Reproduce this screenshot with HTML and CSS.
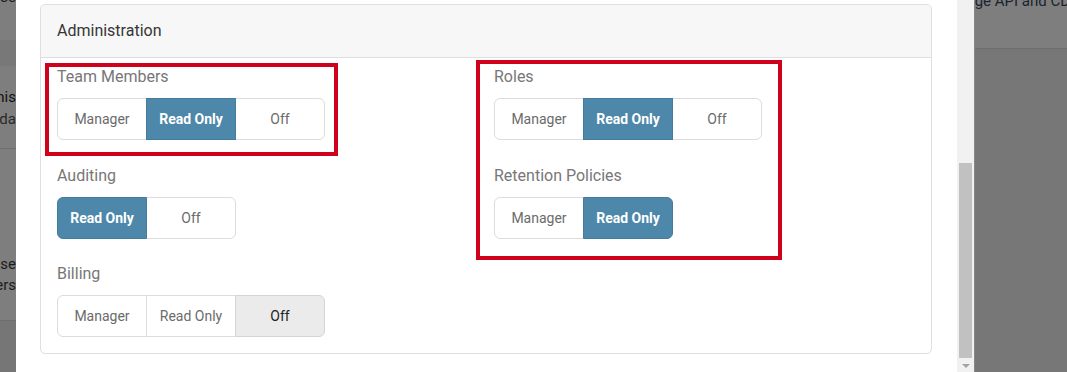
FILE: index.html
```html
<!DOCTYPE html>
<html>
<head>
<meta charset="utf-8">
<link rel="stylesheet" href="styles.css">
</head>
<body>
<div class="page">
  <aside class="bg-left">
    <div class="bl bl-a"><span class="frag frag-top">use</span></div>
    <div class="bl bl-b"></div>
    <div class="bl bl-c"><span class="frag frag-strong">Adminis</span><span class="frag">Upda</span></div>
    <div class="bl bl-d"><span class="frag">House</span><span class="frag">Others</span></div>
    <div class="bl bl-e"></div>
  </aside>

  <main class="modal">
    <div class="modal-content">
      <section class="card">
        <header class="card-header">Administration</header>
        <div class="card-body">
          <div class="col">
            <div class="field">
              <div class="label">Team Members</div>
              <div class="group">
                <button class="btn">Manager</button>
                <button class="btn active">Read Only</button>
                <button class="btn">Off</button>
              </div>
            </div>
            <div class="field">
              <div class="label">Auditing</div>
              <div class="group">
                <button class="btn active">Read Only</button>
                <button class="btn">Off</button>
              </div>
            </div>
            <div class="field field-tight">
              <div class="label">Billing</div>
              <div class="group">
                <button class="btn">Manager</button>
                <button class="btn">Read Only</button>
                <button class="btn selected">Off</button>
              </div>
            </div>
          </div>
          <div class="col">
            <div class="field">
              <div class="label">Roles</div>
              <div class="group">
                <button class="btn">Manager</button>
                <button class="btn active">Read Only</button>
                <button class="btn">Off</button>
              </div>
            </div>
            <div class="field">
              <div class="label">Retention Policies</div>
              <div class="group">
                <button class="btn">Manager</button>
                <button class="btn active">Read Only</button>
              </div>
            </div>
          </div>
          <div class="mark mark-team"></div>
          <div class="mark mark-roles"></div>
        </div>
      </section>
    </div>
    <div class="scrollbar">
      <div class="thumb"></div>
      <div class="arrow"></div>
    </div>
  </main>

  <aside class="bg-right">
    <div class="br-top"><span class="frag-right">Manage API and CDN</span></div>
    <div class="br-rest"></div>
  </aside>
</div>
</body>
</html>
```

FILE: styles.css
```css
* { box-sizing: border-box; }
html, body { margin: 0; padding: 0; }
body {
  width: 1067px;
  height: 372px;
  overflow: hidden;
  font-family: Roboto, "Liberation Sans", sans-serif;
  background: #777;
}
.page {
  display: flex;
  height: 372px;
}

/* background page under overlay */
.bg-left {
  width: 16px;
  flex: 0 0 16px;
  overflow: hidden;
  display: flex;
  flex-direction: column;
  font-family: Roboto, "Liberation Sans", sans-serif;
  font-size: 15px;
  color: #1f1f1f;
}
.bl {
  display: flex;
  flex-direction: column;
  align-items: flex-end;
  background: #7e7e7e;
}
.frag { white-space: nowrap; line-height: 22px; }
.bl-a { height: 40px; }
.frag-top { margin-top: -14px; }
.bl-b { height: 26px; background: #787878; }
.bl-c { height: 83px; padding-top: 20px; border-bottom: 1px solid #6e6e6e; }
.frag-strong { color: #111; }
.bl-c .frag:last-child { color: #2a2a2a; font-size: 15px; }
.bl-d { height: 172px; padding-top: 105px; border-bottom: 1px solid #6e6e6e; }
.bl-d .frag { line-height: 21px; color: #1c1c1c; }
.bl-e { flex: 1; background: #767676; }

.bg-right {
  flex: 1;
  display: flex;
  flex-direction: column;
  border-left: 1px solid #888;
  min-width: 0;
}
.br-top {
  height: 49px;
  background: #7e7e7e;
  border-bottom: 1px solid #6e6e6e;
  overflow: hidden;
  font-size: 15px;
  color: #1c2330;
}
.frag-right {
  display: block;
  white-space: nowrap;
  margin-top: -9px;
  margin-left: -38px;
  line-height: 20px;
}
.br-rest { flex: 1; background: #777; }

/* modal */
.modal {
  width: 958px;
  flex: 0 0 958px;
  display: flex;
  background: #fff;
}
.modal-content {
  flex: 1;
  padding: 4px 25px 0 24px;
}
.scrollbar {
  width: 17px;
  flex: 0 0 17px;
  background: #f1f1f1;
  position: relative;
}
.thumb {
  position: absolute;
  left: 2px;
  right: 2px;
  top: 163px;
  height: 195px;
  background: #c1c1c1;
}
.arrow {
  position: absolute;
  left: 5px;
  top: 364px;
  width: 0;
  height: 0;
  border-left: 4px solid transparent;
  border-right: 4px solid transparent;
  border-top: 4px solid #a3a3a3;
}

.card {
  border: 1px solid #dfdfdf;
  border-radius: 5px;
}
.card-header {
  height: 53px;
  line-height: 51px;
  padding-left: 16px;
  background: #f7f7f7;
  border-bottom: 1px solid #dfdfdf;
  border-radius: 5px 5px 0 0;
  font-size: 16px;
  color: #363636;
}
.card-body {
  position: relative;
  display: grid;
  grid-template-columns: 1fr 1fr;
  column-gap: 16px;
  padding: 8px 16px 16px;
}
.field + .field { margin-top: 25px; }
.field + .field-tight { margin-top: 24px; }
.label {
  font-size: 16px;
  line-height: 22px;
  color: #777;
  margin-bottom: 10px;
}
.group {
  display: flex;
}
.btn {
  width: 90px;
  height: 42px;
  margin: 0;
  padding: 0;
  border: 1px solid #dcdcdc;
  background: #fff;
  font-family: Roboto, "Liberation Sans", sans-serif;
  font-size: 14px;
  color: #6b6b6b;
  cursor: pointer;
  position: relative;
}
.btn + .btn { margin-left: -1px; }
.btn:first-child { border-radius: 6px 0 0 6px; }
.btn:last-child { border-radius: 0 6px 6px 0; }
.btn.active {
  background: #4d87aa;
  border-color: #447c9e;
  color: #fff;
  font-weight: 700;
  z-index: 1;
}
.btn.selected {
  background: #ebebeb;
  border-color: #d4d4d4;
  color: #222;
  z-index: 1;
}

.mark {
  position: absolute;
  border: 4px solid #d0021b;
  pointer-events: none;
}
.mark-team { left: 4px; top: 5px; width: 293px; height: 93px; }
.mark-roles { left: 435px; top: 2px; width: 306px; height: 200px; }
```
